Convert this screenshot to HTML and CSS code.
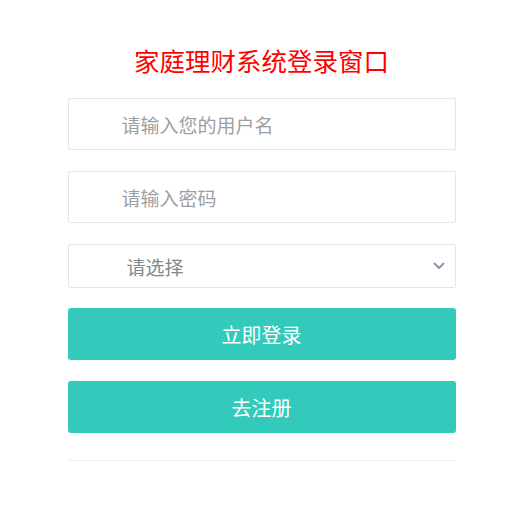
FILE: index.html
```html
<!DOCTYPE html>
<html lang="zh">
<head>
<meta charset="utf-8">
<title>家庭理财系统登录窗口</title>
<link rel="stylesheet" href="styles.css">
</head>
<body>
<div class="card">
  <h1 class="title">家庭理财系统登录窗口</h1>
  <form class="form">
    <input class="field" type="text" placeholder="请输入您的用户名">
    <input class="field" type="password" placeholder="请输入密码">
    <div class="select-wrap">
      <select class="select">
        <option>请选择</option>
      </select>
      <svg class="chevron" width="12" height="8" viewBox="0 0 12 8"><path d="M1.5 1.5 L6 6 L10.5 1.5" fill="none" stroke="#8a94a6" stroke-width="1.8" stroke-linecap="round" stroke-linejoin="round"/></svg>
    </div>
    <button class="btn" type="button">立即登录</button>
    <button class="btn" type="button">去注册</button>
  </form>
  <div class="divider"></div>
</div>
</body>
</html>
```
FILE: styles.css
```css
html, body {
  margin: 0;
  padding: 0;
  background: #ffffff;
}
body {
  font-family: "Noto Sans CJK SC", "Noto Sans", sans-serif;
}
.card {
  width: 388px;
  margin: 0 auto;
  padding-top: 40px;
}
.title {
  margin: 0 0 18px;
  font-size: 25.5px;
  line-height: 40px;
  font-weight: 400;
  color: #ff0000;
  text-align: center;
}
.form {
  display: flex;
  flex-direction: column;
}
.field {
  box-sizing: border-box;
  height: 52px;
  margin: 0 0 21px;
  padding: 0 0 0 53px;
  border: 1px solid #e6e6e6;
  border-radius: 2px;
  font-family: inherit;
  font-size: 19px;
  color: #333;
  outline: none;
}
.field::placeholder {
  color: #9b9ea3;
}
.select-wrap {
  position: relative;
  margin-bottom: 20px;
}
.select {
  box-sizing: border-box;
  width: 100%;
  height: 44px;
  padding: 0 0 0 58px;
  border: 1px solid #e6e6e6;
  border-radius: 2px;
  background: #fff;
  font-family: inherit;
  font-size: 19px;
  color: #808790;
  appearance: none;
  -webkit-appearance: none;
  outline: none;
}
.chevron {
  position: absolute;
  right: 11px;
  top: 18px;
}
.btn {
  height: 52px;
  margin: 0 0 21px;
  border: none;
  border-radius: 3px;
  background: #33cabb;
  color: #ffffff;
  font-family: inherit;
  font-size: 20px;
  cursor: pointer;
}
.btn:last-child {
  margin-bottom: 0;
}
.divider {
  margin-top: 27px;
  height: 1px;
  background: #f1f1f1;
}
```
